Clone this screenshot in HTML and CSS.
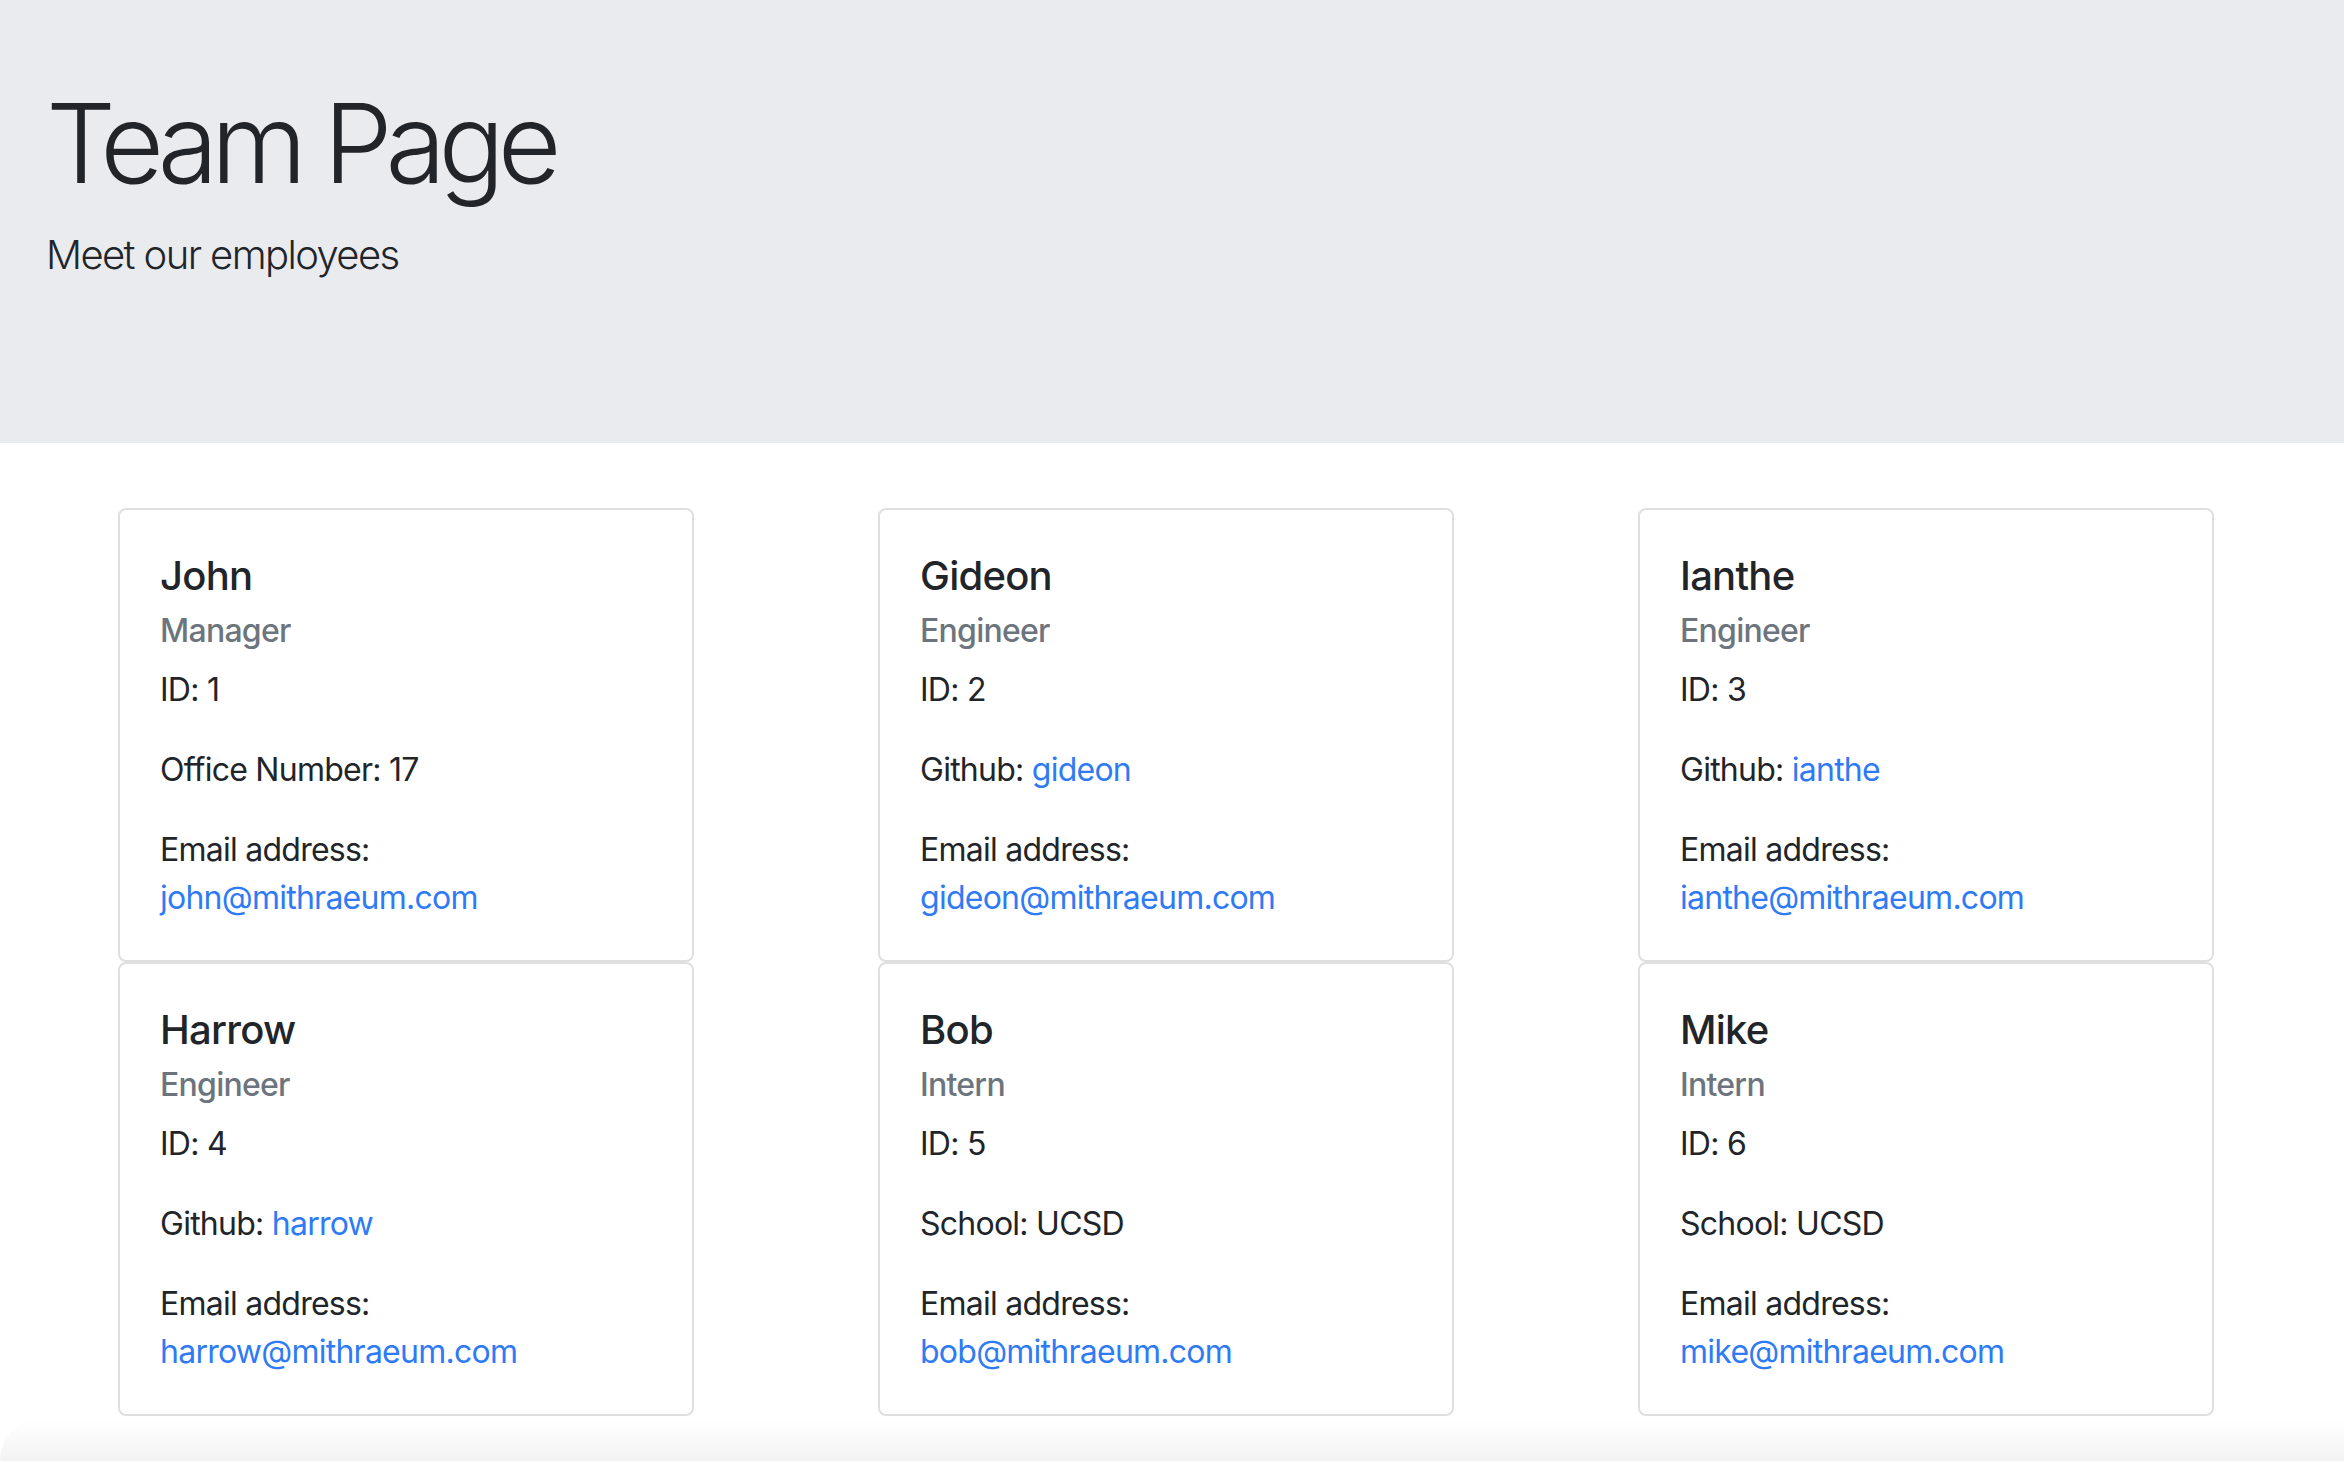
FILE: index.html
```html
<!DOCTYPE html>
<html lang="en">
<head>
<meta charset="utf-8">
<title>Team Page</title>
<link rel="stylesheet" href="styles.css">
</head>
<body>
<header class="jumbotron">
  <h1 class="display">Team Page</h1>
  <p class="lead">Meet our employees</p>
</header>
<main class="team">
  <div class="card">
    <h5 class="card-title">John</h5>
    <h6 class="card-subtitle">Manager</h6>
    <p class="card-text">ID: 1</p>
    <p class="card-text">Office Number: 17</p>
    <p class="card-text">Email address: <a href="#">john@mithraeum.com</a></p>
  </div>
  <div class="card">
    <h5 class="card-title">Gideon</h5>
    <h6 class="card-subtitle">Engineer</h6>
    <p class="card-text">ID: 2</p>
    <p class="card-text">Github: <a href="#">gideon</a></p>
    <p class="card-text">Email address: <a href="#">gideon@mithraeum.com</a></p>
  </div>
  <div class="card">
    <h5 class="card-title">Ianthe</h5>
    <h6 class="card-subtitle">Engineer</h6>
    <p class="card-text">ID: 3</p>
    <p class="card-text">Github: <a href="#">ianthe</a></p>
    <p class="card-text">Email address: <a href="#">ianthe@mithraeum.com</a></p>
  </div>
  <div class="card">
    <h5 class="card-title">Harrow</h5>
    <h6 class="card-subtitle">Engineer</h6>
    <p class="card-text">ID: 4</p>
    <p class="card-text">Github: <a href="#">harrow</a></p>
    <p class="card-text">Email address: <a href="#">harrow@mithraeum.com</a></p>
  </div>
  <div class="card">
    <h5 class="card-title">Bob</h5>
    <h6 class="card-subtitle">Intern</h6>
    <p class="card-text">ID: 5</p>
    <p class="card-text">School: UCSD</p>
    <p class="card-text">Email address: <a href="#">bob@mithraeum.com</a></p>
  </div>
  <div class="card">
    <h5 class="card-title">Mike</h5>
    <h6 class="card-subtitle">Intern</h6>
    <p class="card-text">ID: 6</p>
    <p class="card-text">School: UCSD</p>
    <p class="card-text">Email address: <a href="#">mike@mithraeum.com</a></p>
  </div>
</main>
<div class="page-foot"></div>
</body>
</html>
```
FILE: styles.css
```css
html, body {
  margin: 0;
  padding: 0;
}
body {
  font-family: Inter, "Noto Sans", "Liberation Sans", sans-serif;
  color: #212529;
  background: #fff;
  font-size: 32px;
  line-height: 1.5;
}
.jumbotron {
  background: #eaebef;
  padding: 77px 46px 0;
  height: 443px;
  box-sizing: border-box;
}
.display {
  font-size: 110px;
  font-weight: 300;
  line-height: 132px;
  margin: 0 0 16px;
  letter-spacing: -7.2px;
}
.lead {
  font-size: 40px;
  font-weight: 300;
  line-height: 60px;
  margin: 0;
  letter-spacing: -1.6px;
}
.team {
  display: grid;
  grid-template-columns: repeat(3, 760px);
  justify-items: center;
  padding-left: 26px;
  margin-top: 65px;
}
.card {
  width: 576px;
  box-sizing: border-box;
  border: 2px solid #dfdfdf;
  border-radius: 8px;
  padding: 42px 40px 38px;
  background: #fff;
  letter-spacing: -0.75px;
}
.card-title {
  font-size: 40px;
  font-weight: 500;
  line-height: 48px;
  margin: 0 0 24px;
}
.card-subtitle {
  font-size: 32px;
  font-weight: 500;
  line-height: 38px;
  color: #6c757d;
  margin: -12px 0 16px;
}
.card-text {
  margin: 0 0 32px;
  line-height: 48px;
}
.card-text:last-child {
  margin-bottom: 0;
}
.card-text a {
  color: #2f7bf5;
  text-decoration: none;
}
.page-foot {
  height: 42px;
  margin-top: 3px;
  background: linear-gradient(#fff, #f3f3f3);
  border-top-left-radius: 40px 42px;
}
```
